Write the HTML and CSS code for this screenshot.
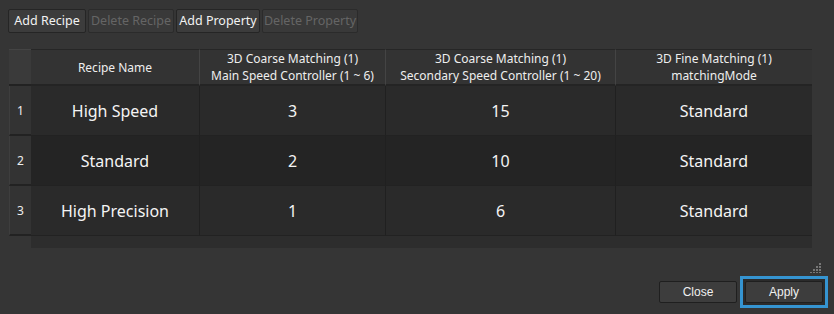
FILE: index.html
```html
<!DOCTYPE html>
<html lang="en">
<head>
  <meta charset="UTF-8">
  <title>Recipe Editor</title>
  <link rel="stylesheet" href="styles.css">
</head>
<body>
  <div class="dialog">
    <div class="toolbar">
      <button class="tool w-add-recipe">Add Recipe</button>
      <button class="tool w-del-recipe" disabled>Delete Recipe</button>
      <button class="tool w-add-prop">Add Property</button>
      <button class="tool w-del-prop" disabled>Delete Property</button>
    </div>

    <div class="table">
      <div class="corner"></div>
      <div class="head">Recipe Name</div>
      <div class="head">3D Coarse Matching (1)<br>Main Speed Controller (1 ~ 6)</div>
      <div class="head">3D Coarse Matching (1)<br>Secondary Speed Controller (1 ~ 20)</div>
      <div class="head last">3D Fine Matching (1)<br>matchingMode</div>

      <div class="num">1</div>
      <div class="cell">High Speed</div>
      <div class="cell">3</div>
      <div class="cell">15</div>
      <div class="cell last">Standard</div>

      <div class="num">2</div>
      <div class="cell alt">Standard</div>
      <div class="cell alt">2</div>
      <div class="cell alt">10</div>
      <div class="cell alt last">Standard</div>

      <div class="num">3</div>
      <div class="cell">High Precision</div>
      <div class="cell">1</div>
      <div class="cell">6</div>
      <div class="cell last">Standard</div>

      <div class="gap"></div>
      <div class="strip"></div>
    </div>

    <div class="grip-row">
      <svg class="grip" width="12" height="10" viewBox="0 0 12 10">
        <rect x="9" y="0" width="2" height="2" fill="#777"/>
        <rect x="6" y="3" width="2" height="2" fill="#777"/>
        <rect x="9" y="3" width="2" height="2" fill="#777"/>
        <rect x="3" y="6" width="2" height="2" fill="#777"/>
        <rect x="6" y="6" width="2" height="2" fill="#777"/>
        <rect x="9" y="6" width="2" height="2" fill="#777"/>
        <rect x="0" y="9" width="2" height="1" fill="#777"/>
        <rect x="3" y="9" width="2" height="1" fill="#777"/>
        <rect x="6" y="9" width="2" height="1" fill="#777"/>
        <rect x="9" y="9" width="2" height="1" fill="#777"/>
      </svg>
    </div>

    <div class="footer">
      <button class="btn">Close</button>
      <span class="focus"><button class="btn">Apply</button></span>
    </div>
  </div>
</body>
</html>
```

FILE: styles.css
```css
html, body {
  margin: 0;
  background-color: #353535;
}

body {
  width: 834px;
  height: 314px;
  overflow: hidden;
  font-family: "Noto Sans", "Open Sans", sans-serif;
  color: #f0f0f0;
}

.toolbar {
  display: flex;
  gap: 2px;
  padding: 9px 0 0 8px;
}

.tool {
  height: 24px;
  padding: 0;
  background-color: #3c3c3c;
  border: 1px solid #252525;
  border-radius: 2px;
  color: #f2f2f2;
  font-family: "Noto Sans", sans-serif;
  font-size: 12.5px;
  line-height: 20px;
  white-space: nowrap;
}

.tool:disabled {
  background-color: #393939;
  color: #656565;
  border-color: #2b2b2b;
}

.w-add-recipe { width: 78px; }
.w-del-recipe { width: 86px; }
.w-add-prop { width: 84px; }
.w-del-prop { width: 96px; }

.table {
  display: grid;
  grid-template-columns: 22px 169px 186px 230px 196px;
  grid-template-rows: 37px 50px 50px 50px 12px;
  margin: 16px 0 0 9px;
  width: 803px;
}

.corner {
  background-color: #3a3a3a;
  border-top: 1px solid #444;
  border-bottom: 2px solid #222;
}

.head {
  display: flex;
  align-items: center;
  justify-content: center;
  text-align: center;
  background-color: #333;
  border-top: 1px solid #262626;
  border-bottom: 2px solid #242424;
  border-right: 1px solid #444;
  font-size: 12px;
  line-height: 17px;
  color: #eee;
}

.head.last {
  border-right: none;
}

.num {
  display: flex;
  align-items: center;
  justify-content: center;
  background-color: #333;
  border-left: 1px solid #3e3e3e;
  border-bottom: 2px solid #222;
  font-size: 12px;
  color: #eee;
}

.cell {
  display: flex;
  align-items: center;
  justify-content: center;
  background-color: #2a2a2a;
  border-right: 1px solid #202020;
  border-bottom: 1px solid #222;
  font-size: 16px;
  color: #f4f4f4;
}

.cell.alt {
  background-color: #242424;
}

.cell.last {
  border-right: none;
}

.gap {
  background-color: #353535;
}

.strip {
  grid-column: 2 / 6;
  background-color: #2d2d2d;
}

.grip-row {
  display: flex;
  justify-content: flex-end;
  padding: 15px 12px 0 0;
  height: 10px;
}

.grip {
  display: block;
}

.footer {
  display: flex;
  justify-content: flex-end;
  align-items: center;
  gap: 3px;
  padding: 3px 6px 0 0;
}

.btn {
  width: 78px;
  height: 22px;
  background-color: #3d3d3d;
  border: 1px solid #1f1f1f;
  border-radius: 2px;
  color: #f0f0f0;
  font-family: "Liberation Sans", Arial, sans-serif;
  font-size: 12px;
}

.focus {
  display: flex;
  padding: 2px;
  border: 3px solid #3594d1;
  background-color: #2b2b2b;
}
```
